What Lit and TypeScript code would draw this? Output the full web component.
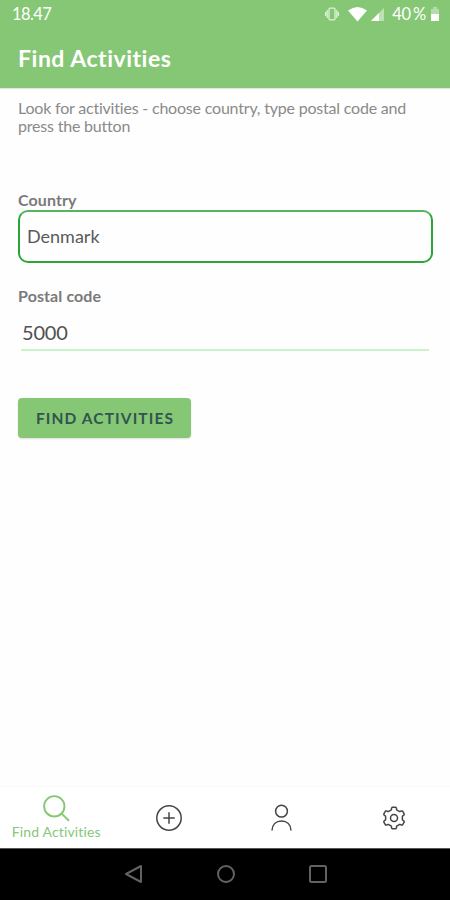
import { LitElement, html, css, svg } from "lit";
import { customElement } from "lit/decorators.js";

const gearPath = (() => {
  const pts: string[] = [];
  for (let i = 0; i < 6; i++) {
    const mid = -90 + i * 60;
    for (const [off, r] of [[-24, 8.4], [-17, 8.7], [-14, 10.2], [-9, 11], [9, 11], [14, 10.2], [17, 8.7], [24, 8.4]]) {
      const a = ((mid + off) * Math.PI) / 180;
      pts.push(`${(14 + r * Math.cos(a)).toFixed(2)} ${(14 + r * Math.sin(a)).toFixed(2)}`);
    }
  }
  return `M${pts.join("L")}Z`;
})();

const icons = {
  search: svg`<circle cx="12.3" cy="12.3" r="10.2"/><path d="M19.4 19.4L27 26.8"/>`,
  add: svg`<circle cx="14" cy="14" r="12.2"/><path d="M14 8.3V19.7M8.3 14H19.7"/>`,
  user: svg`<circle cx="14.5" cy="7.2" r="5.9"/><path d="M5 26.6C5.2 20.6 9 17 14.5 17S23.8 20.6 24 26.6"/>`,
  gear: svg`<path d=${gearPath}/><circle cx="14" cy="14" r="3.5"/>`,
};

@customElement("app-root")
export class AppRoot extends LitElement {
  static styles = css`
    :host { display: flex; flex-direction: column; width: 450px; height: 900px; background: #fefefe;
      font-family: Lato, "Noto Sans", sans-serif; font-variant-ligatures: none; overflow: hidden; }
    * { box-sizing: border-box; }
    svg { display: block; fill: none; flex: none; }
    .top { height: 88px; background: #86c776; color: #fff; flex: none; box-shadow: 0 1px 1px #dcebd8; }
    .status { height: 28px; padding: 0 9px 0 12px; display: flex; align-items: center; font-size: 16.5px; }
    .time { flex: 1; letter-spacing: -0.6px; line-height: 28px; height: 28px; }
    .signal { margin-left: -7px; }
    .battery { white-space: nowrap; margin: 0 3px 0 7px; font-size: 16.5px; word-spacing: -2px; letter-spacing: -0.2px; line-height: 28px; height: 28px; }
    .title { margin: 0; padding-left: 18px; height: 60px; line-height: 60px; font-size: 23px; font-weight: 700; letter-spacing: 0.52px; }
    .main { flex: 1; padding: 11px 17px 0 18px; display: flex; flex-direction: column; align-items: flex-start; }
    .intro { margin: 0; font-size: 16px; line-height: 18px; color: #8a8a8a; white-space: pre; height: 92px; letter-spacing: -0.2px; }
    .label { font-size: 16px; font-weight: 700; line-height: 20px; height: 20px; color: #7a7a7a; margin-top: -1px; letter-spacing: 0.1px; }
    .select { width: 100%; height: 53px; border: 2px solid #2ba634; border-top-color: #57b45f; border-radius: 10px; padding-left: 7px;
      font-size: 18px; line-height: 49px; color: #5a5a5a; margin-bottom: 24px; }
    .input { width: 408px; margin-left: 3px; height: 45px; line-height: 34px; padding: 9px 0 0 1px; border-bottom: 2px solid #c8f6c9;
      font-size: 20px; color: #505050; letter-spacing: -0.2px; }
    .button { margin-top: 47px; width: 173px; height: 40px; border: 0; border-radius: 4px; background: #86c776; color: #31554f;
      font: 700 15.5px/40px Lato, sans-serif; letter-spacing: 1.1px; padding: 0 0 0 1px; box-shadow: 0 1px 2px #0002; }
    .tabs { height: 62px; flex: none; display: grid; grid-template-columns: repeat(4, 1fr); border-top: 1px solid #fafafa; background: #fff; }
    .tab { display: flex; flex-direction: column; align-items: center; justify-content: center; color: #454545; stroke: currentColor; stroke-width: 1.5; }
    .tab.active { color: #86c776; stroke-width: 1.9; justify-content: flex-start; padding-top: 7px; }
    .caption { stroke: none; font-size: 14px; line-height: 18px; margin-top: 1px; letter-spacing: 0.14px; }
    .nav { height: 52px; flex: none; background: #000; border-top: 1px solid #555; display: flex; justify-content: center; align-items: center; gap: 72px;
      stroke: #626262; stroke-width: 2; stroke-linejoin: round; padding: 0 0 1px 1px; }
  `;

  render() {
    return html`
      <header class="top">
        <div class="status">
          <span class="time">18.47</span>
          <svg width="16" height="16" viewBox="0 0 16 16" stroke="#dcf1d6" stroke-width="1.3"><rect x="5" y="2.2" width="6" height="11.6" rx="1"/><path d="M3.2 4v8M12.8 4v8M1.6 6v4M14.4 6v4"/></svg>
          <svg width="37" height="16" viewBox="0 0 37 16"><path d="M8 4.5Q17.5 -2.5 27 4.5L17.5 15.5Z" fill="#fff"/></svg>
          <svg class="signal" width="15" height="16" viewBox="0 0 15 16"><path d="M14 2V15H1Z" fill="#bce1b3"/><path d="M9 7V15H1Z" fill="#fff"/></svg>
          <span class="battery">40 %</span>
          <svg width="12" height="16" viewBox="0 0 12 16"><path d="M4 1H8V3H10V9H2V3H4Z" fill="#b5dda9"/><path d="M2 8H10V15H2Z" fill="#fff"/></svg>
        </div>
        <h1 class="title">Find Activities</h1>
      </header>
      <main class="main">
        <p class="intro">Look for activities - choose country, type postal code and
press the button</p>
        <div class="label">Country</div>
        <div class="select">Denmark</div>
        <div class="label">Postal code</div>
        <div class="input">5000</div>
        <button class="button">FIND ACTIVITIES</button>
      </main>
      <nav class="tabs">
        <div class="tab active"><svg width="28" height="28">${icons.search}</svg><span class="caption">Find Activities</span></div>
        <div class="tab"><svg width="28" height="28">${icons.add}</svg></div>
        <div class="tab"><svg width="28" height="28">${icons.user}</svg></div>
        <div class="tab"><svg width="28" height="28" stroke-linejoin="round">${icons.gear}</svg></div>
      </nav>
      <footer class="nav">
        <svg width="20" height="20"><path d="M2 10L17 2V18Z"/></svg>
        <svg width="20" height="20"><circle cx="10" cy="10" r="8"/></svg>
        <svg width="20" height="20"><rect x="2" y="2" width="16" height="16" rx="1.5"/></svg>
      </footer>
    `;
  }
}
